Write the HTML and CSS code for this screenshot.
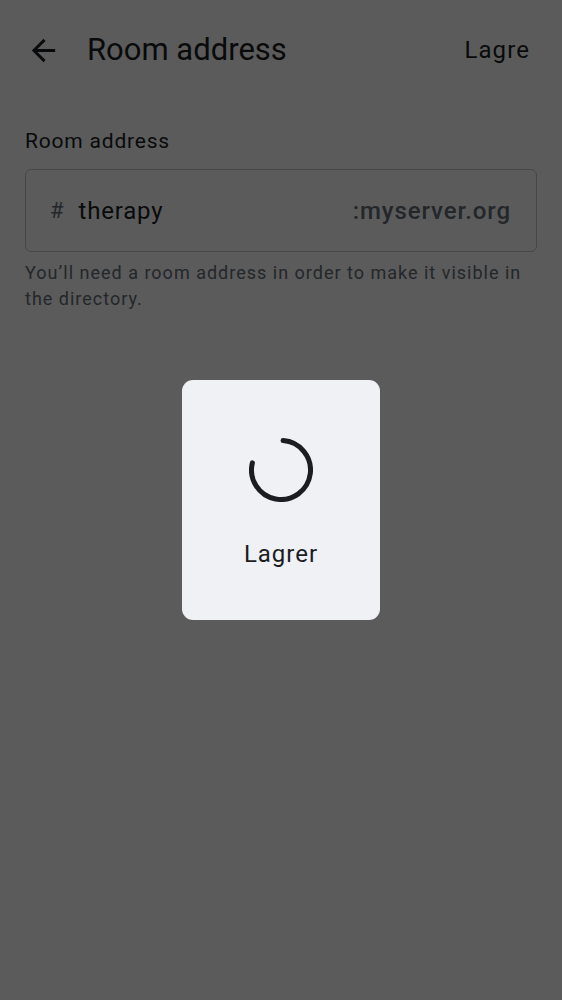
FILE: index.html
```html
<!DOCTYPE html>
<html lang="en">
<head>
<meta charset="utf-8">
<title>Room address</title>
<link rel="stylesheet" href="styles.css">
</head>
<body>
<div class="screen">
  <header class="topbar">
    <button class="back" aria-label="Back">
      <svg viewBox="0 0 24 24" width="35" height="35"><path d="M20 11H7.83l5.59-5.59L12 4l-8 8 8 8 1.41-1.41L7.83 13H20v-2z" fill="currentColor"/></svg>
    </button>
    <h1 class="title">Room address</h1>
    <span class="save">Lagre</span>
  </header>
  <main class="content">
    <div class="label">Room address</div>
    <div class="field">
      <span class="hash">#</span>
      <span class="alias">therapy</span>
      <span class="server">:myserver.org</span>
    </div>
    <p class="help">You’ll need a room address in order to make it visible in the directory.</p>
  </main>
</div>
<div class="scrim">
  <div class="dialog">
    <svg class="spinner" viewBox="0 0 64 64" width="64" height="64"><path d="M34.06 2.57 A29.5 29.5 0 1 1 3.38 24.86" fill="none" stroke="currentColor" stroke-width="5" stroke-linecap="round"/></svg>
    <div class="dlabel">Lagrer</div>
  </div>
</div>
</body>
</html>
```
FILE: styles.css
```css
html, body {
  margin: 0;
  padding: 0;
}
body {
  width: 562px;
  height: 1000px;
  overflow: hidden;
  background: #ffffff;
  font-family: Roboto, "Noto Sans", sans-serif;
  color: #1b1d22;
  position: relative;
}
.screen {
  height: 1000px;
}
.topbar {
  display: flex;
  align-items: center;
  height: 100px;
  padding: 0 32px 0 26px;
}
.back {
  display: flex;
  width: 35px;
  height: 35px;
  padding: 0;
  border: 0;
  background: none;
  color: #1b1d22;
}
.title {
  margin: 0 0 0 26px;
  font-size: 31px;
  font-weight: 400;
  line-height: 36px;
}
.save {
  margin-left: auto;
  font-size: 24px;
  line-height: 30px;
  letter-spacing: 1.1px;
}
.content {
  padding: 0 25px;
}
.label {
  margin-top: 29px;
  font-size: 21px;
  line-height: 24px;
  letter-spacing: 0.8px;
}
.field {
  margin-top: 16px;
  height: 81px;
  border: 1px solid #c4c7cc;
  border-radius: 6px;
  display: flex;
  align-items: center;
  padding: 0 25px 0 24px;
}
.hash {
  font-size: 22px;
  color: #656d77;
  margin-right: 15px;
}
.alias {
  font-size: 24px;
  letter-spacing: 0.8px;
}
.server {
  margin-left: auto;
  font-size: 24px;
  font-weight: 500;
  color: #656d77;
  letter-spacing: 0.9px;
}
.help {
  margin: 8px 0 0;
  font-size: 18px;
  line-height: 26px;
  letter-spacing: 1px;
  color: #656d77;
}
.scrim {
  position: absolute;
  inset: 0;
  background: rgba(0, 0, 0, 0.645);
  display: flex;
  align-items: center;
  justify-content: center;
}
.dialog {
  width: 198px;
  height: 240px;
  box-sizing: border-box;
  padding-top: 58px;
  background: #f0f1f5;
  border-radius: 11px;
  display: flex;
  flex-direction: column;
  align-items: center;
  color: #1b1d22;
}
.spinner {
  display: block;
}
.dlabel {
  margin-top: 37px;
  font-size: 24px;
  line-height: 30px;
  letter-spacing: 1px;
}
```
